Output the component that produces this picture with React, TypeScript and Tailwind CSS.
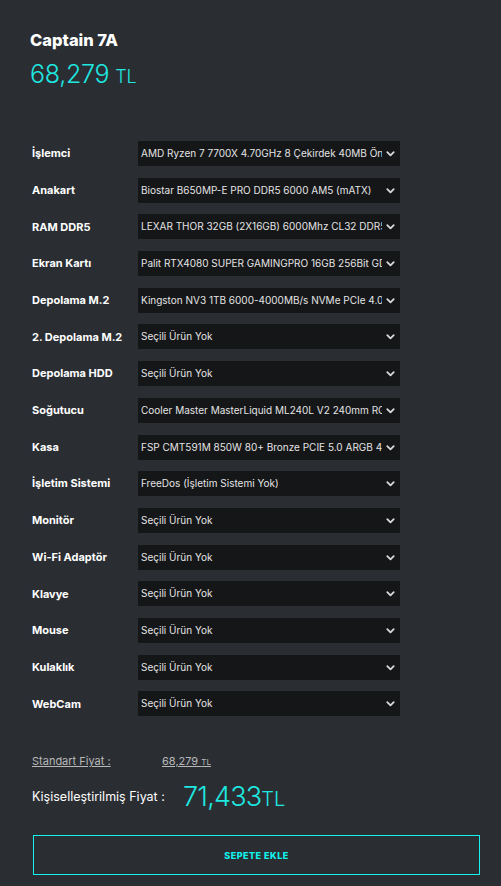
const rows: [string, string][] = [
  ['İşlemci', 'AMD Ryzen 7 7700X 4.70GHz 8 Çekirdek 40MB Önbellek AM5'],
  ['Anakart', 'Biostar B650MP-E PRO DDR5 6000 AM5 (mATX)'],
  ['RAM DDR5', 'LEXAR THOR 32GB (2X16GB) 6000Mhz CL32 DDR5 RAM'],
  ['Ekran Kartı', 'Palit RTX4080 SUPER GAMINGPRO 16GB 256Bit GDDR6X'],
  ['Depolama M.2', 'Kingston NV3 1TB 6000-4000MB/s NVMe PCIe 4.0 M.2 SSD'],
  ['2. Depolama M.2', 'Seçili Ürün Yok'],
  ['Depolama HDD', 'Seçili Ürün Yok'],
  ['Soğutucu', 'Cooler Master MasterLiquid ML240L V2 240mm RGB'],
  ['Kasa', 'FSP CMT591M 850W 80+ Bronze PCIE 5.0 ARGB 4x120mm'],
  ['İşletim Sistemi', 'FreeDos (İşletim Sistemi Yok)'],
  ['Monitör', 'Seçili Ürün Yok'],
  ['Wi-Fi Adaptör', 'Seçili Ürün Yok'],
  ['Klavye', 'Seçili Ürün Yok'],
  ['Mouse', 'Seçili Ürün Yok'],
  ['Kulaklık', 'Seçili Ürün Yok'],
  ['WebCam', 'Seçili Ürün Yok'],
]

function Chevron() {
  return (
    <svg className="w-[11px] h-[11px] shrink-0" viewBox="0 0 24 24" fill="none" stroke="#d8d8d8" strokeWidth={4} strokeLinecap="round" strokeLinejoin="round">
      <path d="M5 9l7 7 7-7" />
    </svg>
  )
}

export default function App() {
  return (
    <div className="min-h-[886px] bg-[#2a2e33] text-white font-['Inter',sans-serif] pl-[32px] pt-[30px]">
      <h1 className="-ml-[2px] text-[16.5px] font-extrabold leading-[20px]">Captain 7A</h1>
      <div className="-ml-[2px] mt-[9px] text-[#1ee8e0] leading-[30px]">
        <span className="text-[25px] font-light tracking-[-0.3px]">68,279</span>
        <span className="text-[18px] font-light ml-[6px]">TL</span>
      </div>

      <div className="mt-[49px] flex flex-col gap-[11.7px]">
        {rows.map(([label, value]) => (
          <div key={label} className="flex items-center">
            <div className="w-[106px] text-[11px] font-bold">{label}</div>
            <div className="w-[262px] h-[25px] bg-[#151618] flex items-center pl-[3px] pr-[4px]">
              <div className="flex-1 min-w-0 overflow-hidden whitespace-nowrap text-[10px] text-[#e4e4e4]">{value}</div>
              <div className="ml-[3px]"><Chevron /></div>
            </div>
          </div>
        ))}
      </div>

      <div className="mt-[37px] flex items-center text-[11px] text-[#b8b8b8]">
        <span className="underline w-[130px]">Standart Fiyat :</span>
        <span className="underline">68,279 <span className="text-[8px]">TL</span></span>
      </div>
      <div className="mt-[7px] flex items-center">
        <span className="text-[12.5px] text-white w-[151px]">Kişiselleştirilmiş Fiyat :</span>
        <span className="text-[#1ee8e0] font-light">
          <span className="text-[27px] tracking-[-0.8px]">71,433</span>
          <span className="text-[20px]">TL</span>
        </span>
      </div>

      <button className="mt-[18px] ml-[1px] w-[447px] h-[40px] border-[1.5px] border-[#11f3ec] text-[#11f3ec] text-[9px] font-extrabold tracking-[0.5px]">
        SEPETE EKLE
      </button>
    </div>
  )
}
